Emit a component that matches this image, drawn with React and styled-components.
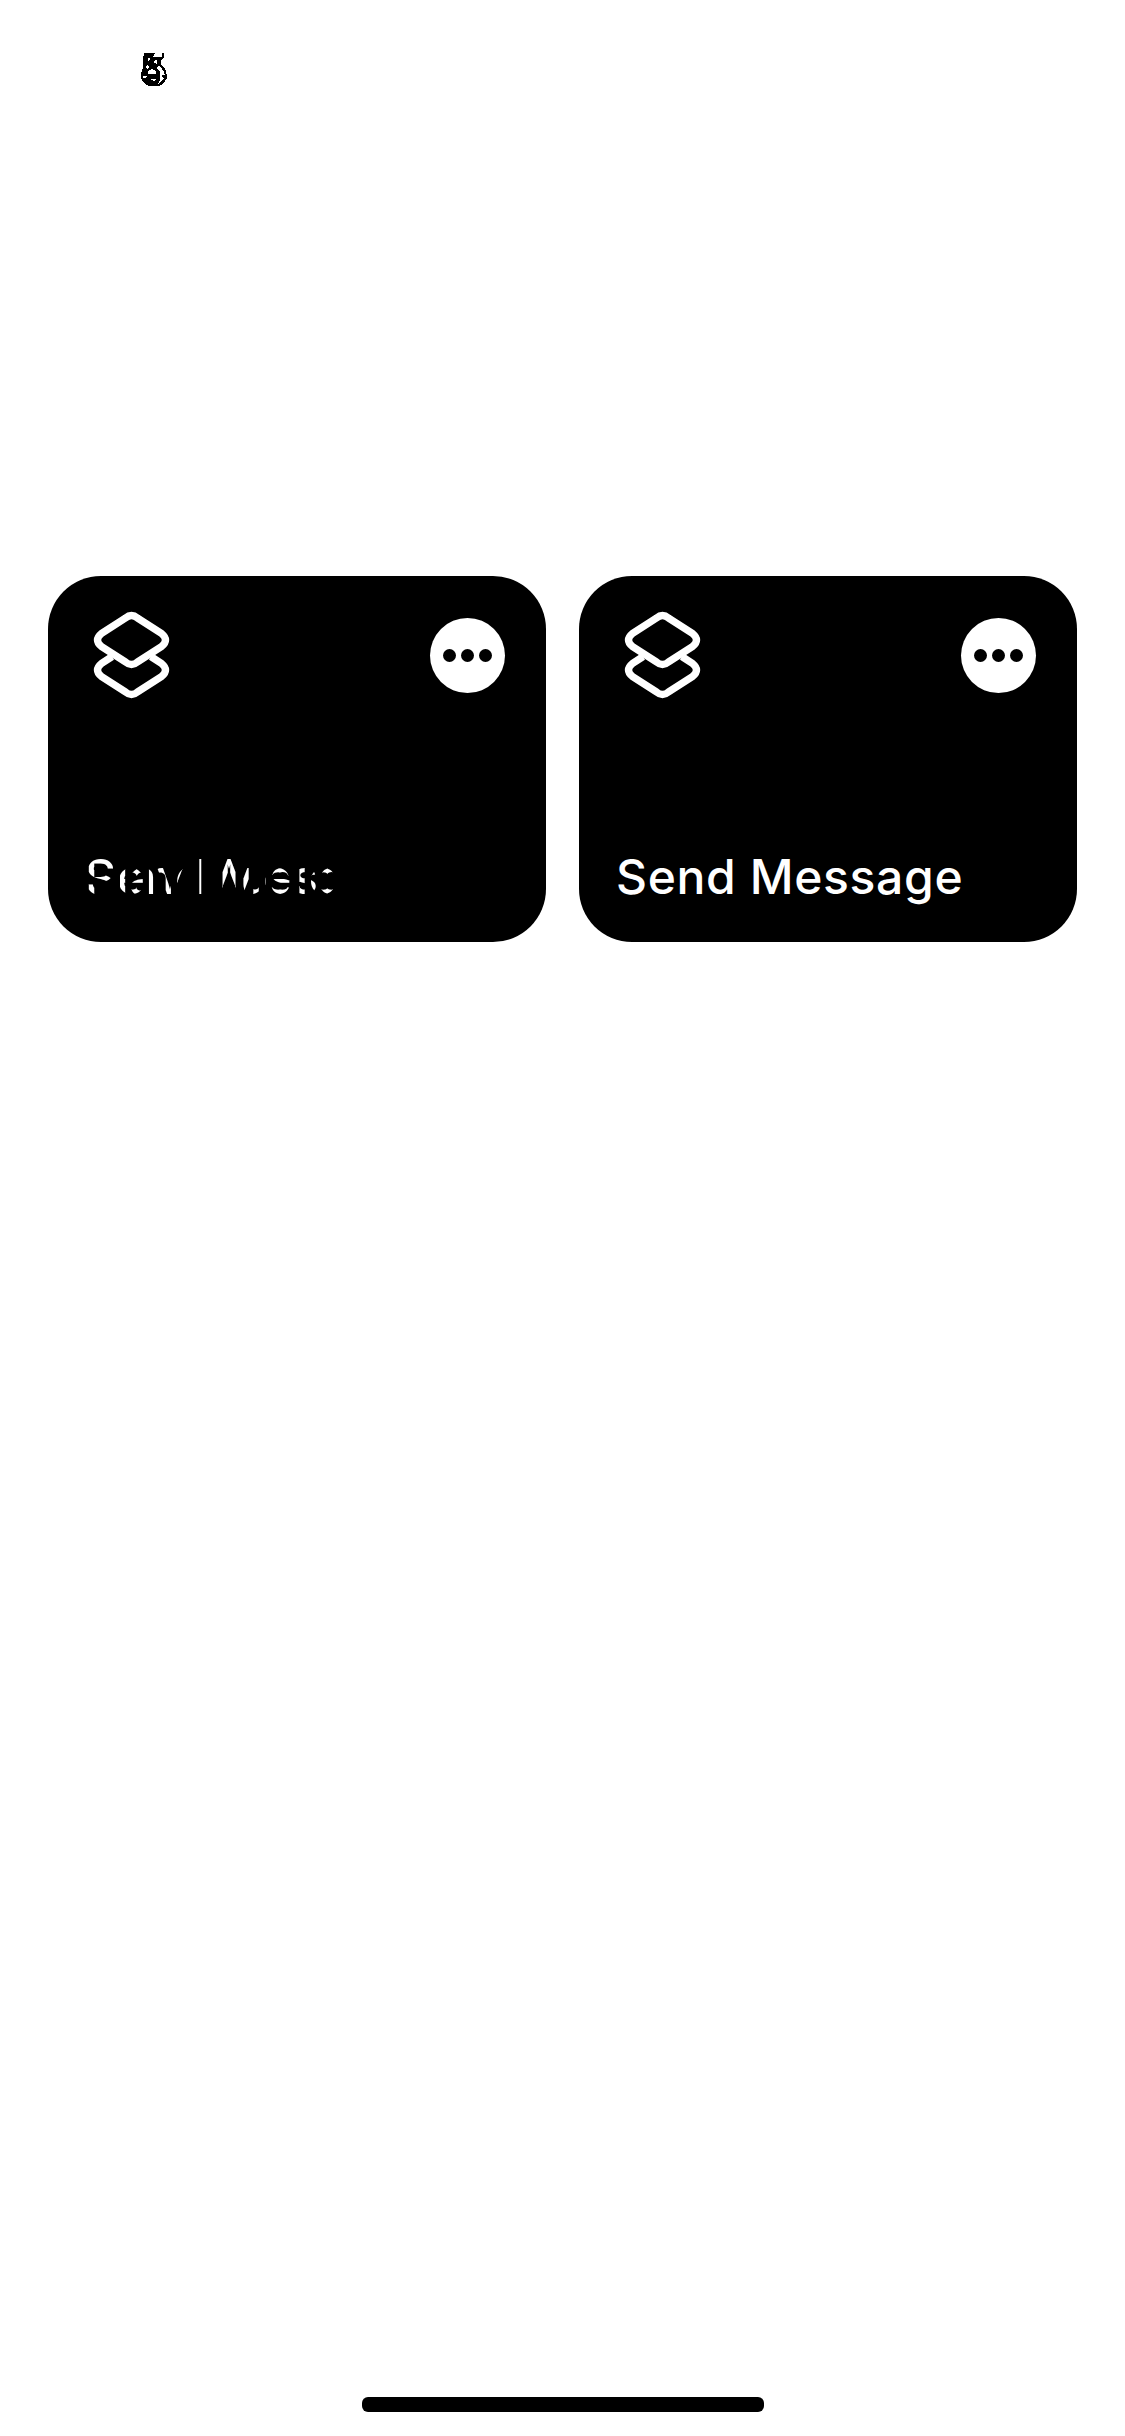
import React from "react";
import styled, { createGlobalStyle } from "styled-components";

const GlobalStyle = createGlobalStyle`
  body { margin: 0; background: #fff; }
  * { box-sizing: border-box; }
`;

const Screen = styled.div`
  width: 1125px;
  height: 2436px;
  display: flex;
  flex-direction: column;
  background: #fff;
  font-family: Inter, "Liberation Sans", sans-serif;
`;

const StatusBar = styled.header`
  height: 576px;
  padding: 53px 0 0 141px;
`;

const StatusMark = styled.svg`
  display: block;
  width: 26px;
  height: 33px;
`;

const Grid = styled.main`
  flex: 1;
  display: grid;
  grid-template-columns: 498px 498px;
  grid-auto-rows: 366px;
  column-gap: 33px;
  padding-left: 48px;
`;

const Card = styled.article`
  display: flex;
  flex-direction: column;
  justify-content: space-between;
  padding: 35px 41px 33px 37px;
  border-radius: 53px;
  background: #000;
  color: #fff;
`;

const CardTop = styled.div`
  display: flex;
  justify-content: space-between;
  padding-left: 3px;
`;

const LayersIcon = styled.svg`
  width: 88px;
  height: 88px;
`;

const MoreButton = styled.button`
  display: flex;
  align-items: center;
  justify-content: center;
  gap: 5px;
  width: 75px;
  height: 75px;
  margin-top: 7px;
  padding: 0 1px 0 0;
  border: 0;
  border-radius: 50%;
  background: #fff;
`;

const Dot = styled.span`
  width: 13px;
  height: 13px;
  border-radius: 50%;
  background: #000;
`;

const Title = styled.div`
  position: relative;
  isolation: isolate;
  height: 58px;
  background: #000;
  font-size: 48px;
  line-height: 52px;
  font-weight: 500;
  letter-spacing: 0.65px;
  white-space: nowrap;
`;

const TitleMask = styled.span`
  position: absolute;
  inset: 0;
  background: #000;
  color: #fff;
  word-spacing: -2.5px;
  mix-blend-mode: darken;
`;

const Footer = styled.footer`
  display: flex;
  justify-content: center;
  padding-bottom: 24px;
`;

const HomeIndicator = styled.div`
  width: 402px;
  height: 15px;
  border-radius: 6px;
  background: #000;
`;

function Shortcut({ name, blendName }) {
  return (
    <Card>
      <CardTop>
        <LayersIcon viewBox="0 0 88 88" fill="none" stroke="#fff" strokeWidth="7.4">
          <path d="M37.5 7 13.500 22.500Q5.500 29 13.500 35.500L37.500 51Q43.500 56 49.500 51L73.500 35.500Q81.500 29 73.500 22.500L49.500 7Q43.500 2 37.500 7Z" />
          <path d="M24 45.700 13.500 52.500Q5.500 59 13.500 65.500L37.500 81Q43.500 86 49.500 81L73.500 65.500Q81.500 59 73.500 52.500L63 45.700" />
        </LayersIcon>
        <MoreButton aria-label="More">
          <Dot />
          <Dot />
          <Dot />
        </MoreButton>
      </CardTop>
      <Title>
        {name}
        {blendName && <TitleMask>{blendName}</TitleMask>}
      </Title>
    </Card>
  );
}

export default function App() {
  return (
    <Screen>
      <GlobalStyle />
      <StatusBar>
        <StatusMark viewBox="0 0 26 33" shapeRendering="crispEdges">
          <path d="M3 0H14L12 4H20.500V0H22.500V5L20 8V12L24 15L25.500 21V26L22 31L18 33H8L3 30L0 25V20L2 15V6Z" />
          <g fill="#fff">
            <path d="M7 5H9V7L7 8ZM14 7H16V11L13 10ZM5 13L7 11L8 14L6 16ZM2 23H6L5 25H2Z" />
            <path d="M7 19Q11 13 15 19V21H7ZM10 26H15V27L13 28L10 27Z" />
            <path d="M17 13L20 14L23 19L24 22L21 22V24L23 25L20 29L17 31L19 27V19L16 15Z" />
          </g>
        </StatusMark>
      </StatusBar>
      <Grid>
        <Shortcut name="Send Message" blendName="Play Music" />
        <Shortcut name="Send Message" />
      </Grid>
      <Footer>
        <HomeIndicator />
      </Footer>
    </Screen>
  );
}
